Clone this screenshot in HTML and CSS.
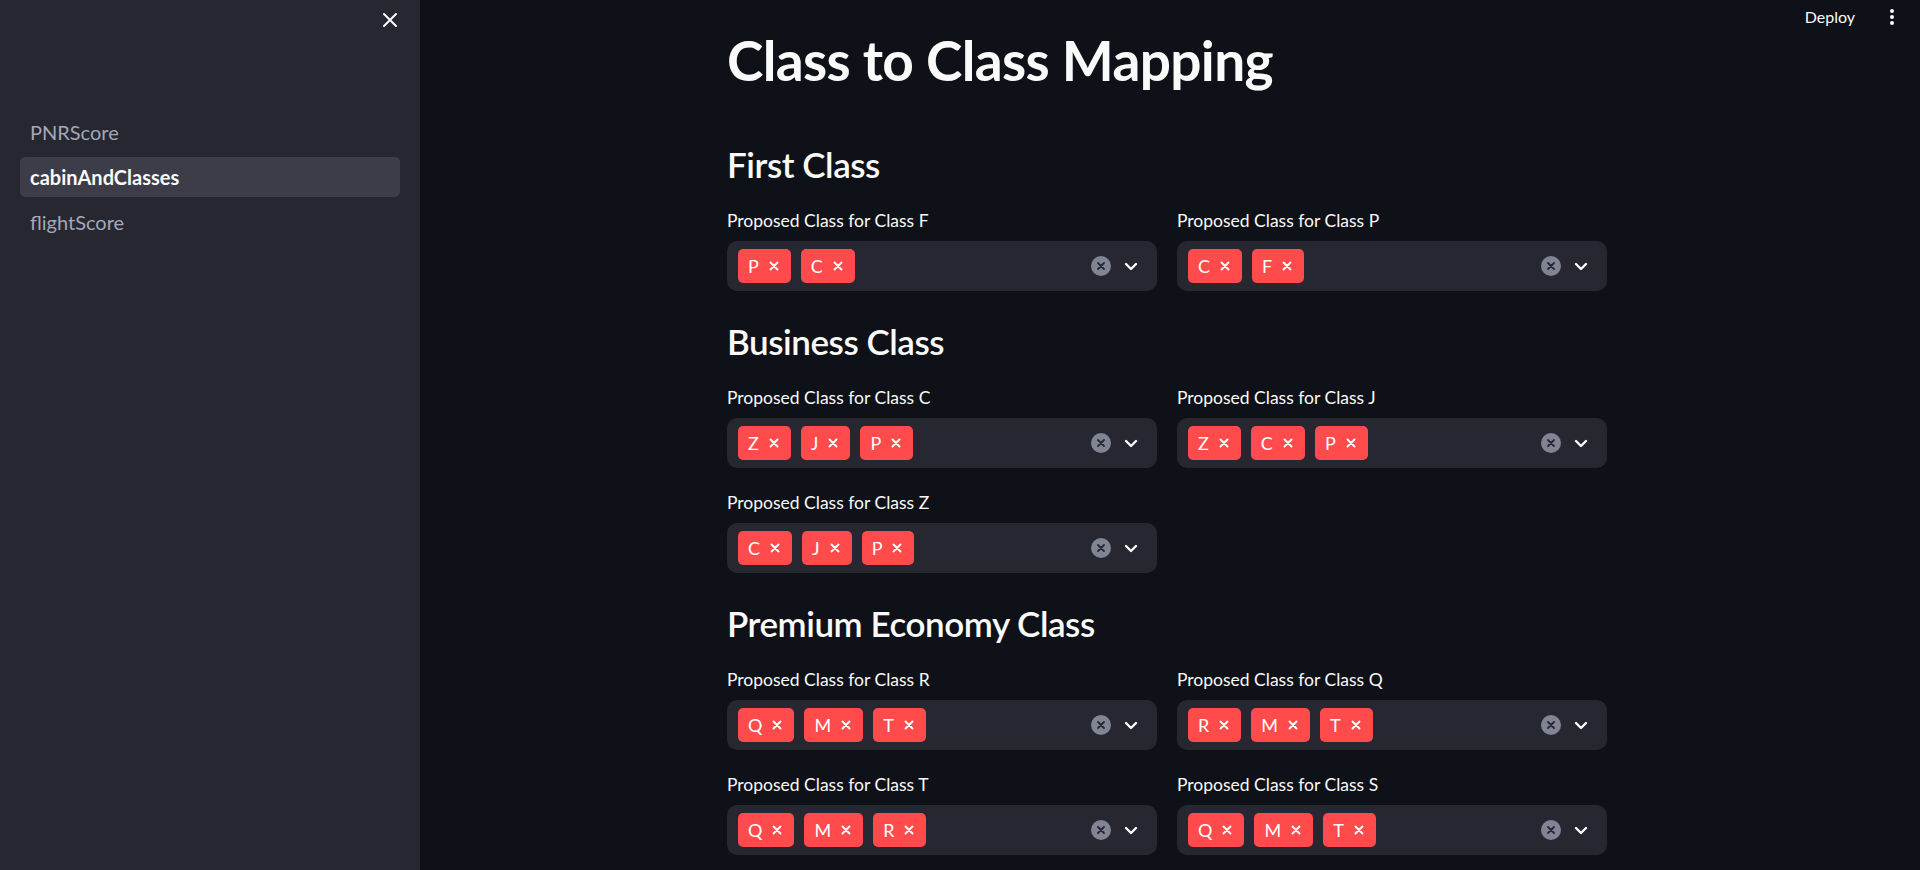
FILE: index.html
```html
<!DOCTYPE html>
<html lang="en">
<head>
<meta charset="utf-8">
<title>cabinAndClasses</title>
<link rel="stylesheet" href="styles.css">
</head>
<body>
<div class="app">
  <aside class="sidebar">
    <div class="sb-top">
      <button class="close" aria-label="Close sidebar">
        <svg width="14" height="14" viewBox="0 0 14 14"><path d="M1 1L13 13M13 1L1 13" stroke="#fafafa" stroke-width="2" stroke-linecap="round"/></svg>
      </button>
    </div>
    <nav class="nav">
      <a class="nav-item">PNRScore</a>
      <a class="nav-item active">cabinAndClasses</a>
      <a class="nav-item">flightScore</a>
    </nav>
  </aside>
  <main class="main">
    <header class="toolbar">
      <span class="deploy">Deploy</span>
      <svg class="dots" width="6" height="18" viewBox="0 0 6 18"><circle cx="3" cy="3" r="2" fill="#fafafa"/><circle cx="3" cy="9" r="2" fill="#fafafa"/><circle cx="3" cy="15" r="2" fill="#fafafa"/></svg>
    </header>
    <div class="block">
      <h1 class="title">Class to Class Mapping</h1>

      <h3 class="subheader">First Class</h3>
      <div class="cols">
        <div class="field">
          <label class="label">Proposed Class for Class F</label>
          <div class="select">
            <div class="tags">
              <span class="tag">P<svg class="tx" width="10" height="10" viewBox="0 0 10 10"><path d="M1.5 1.5L8.5 8.5M8.5 1.5L1.5 8.5"/></svg></span>
              <span class="tag">C<svg class="tx" width="10" height="10" viewBox="0 0 10 10"><path d="M1.5 1.5L8.5 8.5M8.5 1.5L1.5 8.5"/></svg></span>
            </div>
            <div class="icons">
              <svg class="clear" width="20" height="20" viewBox="0 0 20 20"><circle cx="10" cy="10" r="10"/><path d="M7 7L13 13M13 7L7 13"/></svg>
              <svg class="chev" width="14" height="9" viewBox="0 0 14 9"><path d="M2 2L7 7L12 2"/></svg>
            </div>
          </div>
        </div>
        <div class="field">
          <label class="label">Proposed Class for Class P</label>
          <div class="select">
            <div class="tags">
              <span class="tag">C<svg class="tx" width="10" height="10" viewBox="0 0 10 10"><path d="M1.5 1.5L8.5 8.5M8.5 1.5L1.5 8.5"/></svg></span>
              <span class="tag">F<svg class="tx" width="10" height="10" viewBox="0 0 10 10"><path d="M1.5 1.5L8.5 8.5M8.5 1.5L1.5 8.5"/></svg></span>
            </div>
            <div class="icons">
              <svg class="clear" width="20" height="20" viewBox="0 0 20 20"><circle cx="10" cy="10" r="10"/><path d="M7 7L13 13M13 7L7 13"/></svg>
              <svg class="chev" width="14" height="9" viewBox="0 0 14 9"><path d="M2 2L7 7L12 2"/></svg>
            </div>
          </div>
        </div>
      </div>

      <h3 class="subheader">Business Class</h3>
      <div class="cols">
        <div class="field">
          <label class="label">Proposed Class for Class C</label>
          <div class="select">
            <div class="tags">
              <span class="tag">Z<svg class="tx" width="10" height="10" viewBox="0 0 10 10"><path d="M1.5 1.5L8.5 8.5M8.5 1.5L1.5 8.5"/></svg></span>
              <span class="tag">J<svg class="tx" width="10" height="10" viewBox="0 0 10 10"><path d="M1.5 1.5L8.5 8.5M8.5 1.5L1.5 8.5"/></svg></span>
              <span class="tag">P<svg class="tx" width="10" height="10" viewBox="0 0 10 10"><path d="M1.5 1.5L8.5 8.5M8.5 1.5L1.5 8.5"/></svg></span>
            </div>
            <div class="icons">
              <svg class="clear" width="20" height="20" viewBox="0 0 20 20"><circle cx="10" cy="10" r="10"/><path d="M7 7L13 13M13 7L7 13"/></svg>
              <svg class="chev" width="14" height="9" viewBox="0 0 14 9"><path d="M2 2L7 7L12 2"/></svg>
            </div>
          </div>
        </div>
        <div class="field">
          <label class="label">Proposed Class for Class J</label>
          <div class="select">
            <div class="tags">
              <span class="tag">Z<svg class="tx" width="10" height="10" viewBox="0 0 10 10"><path d="M1.5 1.5L8.5 8.5M8.5 1.5L1.5 8.5"/></svg></span>
              <span class="tag">C<svg class="tx" width="10" height="10" viewBox="0 0 10 10"><path d="M1.5 1.5L8.5 8.5M8.5 1.5L1.5 8.5"/></svg></span>
              <span class="tag">P<svg class="tx" width="10" height="10" viewBox="0 0 10 10"><path d="M1.5 1.5L8.5 8.5M8.5 1.5L1.5 8.5"/></svg></span>
            </div>
            <div class="icons">
              <svg class="clear" width="20" height="20" viewBox="0 0 20 20"><circle cx="10" cy="10" r="10"/><path d="M7 7L13 13M13 7L7 13"/></svg>
              <svg class="chev" width="14" height="9" viewBox="0 0 14 9"><path d="M2 2L7 7L12 2"/></svg>
            </div>
          </div>
        </div>
        <div class="field">
          <label class="label">Proposed Class for Class Z</label>
          <div class="select">
            <div class="tags">
              <span class="tag">C<svg class="tx" width="10" height="10" viewBox="0 0 10 10"><path d="M1.5 1.5L8.5 8.5M8.5 1.5L1.5 8.5"/></svg></span>
              <span class="tag">J<svg class="tx" width="10" height="10" viewBox="0 0 10 10"><path d="M1.5 1.5L8.5 8.5M8.5 1.5L1.5 8.5"/></svg></span>
              <span class="tag">P<svg class="tx" width="10" height="10" viewBox="0 0 10 10"><path d="M1.5 1.5L8.5 8.5M8.5 1.5L1.5 8.5"/></svg></span>
            </div>
            <div class="icons">
              <svg class="clear" width="20" height="20" viewBox="0 0 20 20"><circle cx="10" cy="10" r="10"/><path d="M7 7L13 13M13 7L7 13"/></svg>
              <svg class="chev" width="14" height="9" viewBox="0 0 14 9"><path d="M2 2L7 7L12 2"/></svg>
            </div>
          </div>
        </div>
      </div>

      <h3 class="subheader">Premium Economy Class</h3>
      <div class="cols">
        <div class="field">
          <label class="label">Proposed Class for Class R</label>
          <div class="select">
            <div class="tags">
              <span class="tag">Q<svg class="tx" width="10" height="10" viewBox="0 0 10 10"><path d="M1.5 1.5L8.5 8.5M8.5 1.5L1.5 8.5"/></svg></span>
              <span class="tag">M<svg class="tx" width="10" height="10" viewBox="0 0 10 10"><path d="M1.5 1.5L8.5 8.5M8.5 1.5L1.5 8.5"/></svg></span>
              <span class="tag">T<svg class="tx" width="10" height="10" viewBox="0 0 10 10"><path d="M1.5 1.5L8.5 8.5M8.5 1.5L1.5 8.5"/></svg></span>
            </div>
            <div class="icons">
              <svg class="clear" width="20" height="20" viewBox="0 0 20 20"><circle cx="10" cy="10" r="10"/><path d="M7 7L13 13M13 7L7 13"/></svg>
              <svg class="chev" width="14" height="9" viewBox="0 0 14 9"><path d="M2 2L7 7L12 2"/></svg>
            </div>
          </div>
        </div>
        <div class="field">
          <label class="label">Proposed Class for Class Q</label>
          <div class="select">
            <div class="tags">
              <span class="tag">R<svg class="tx" width="10" height="10" viewBox="0 0 10 10"><path d="M1.5 1.5L8.5 8.5M8.5 1.5L1.5 8.5"/></svg></span>
              <span class="tag">M<svg class="tx" width="10" height="10" viewBox="0 0 10 10"><path d="M1.5 1.5L8.5 8.5M8.5 1.5L1.5 8.5"/></svg></span>
              <span class="tag">T<svg class="tx" width="10" height="10" viewBox="0 0 10 10"><path d="M1.5 1.5L8.5 8.5M8.5 1.5L1.5 8.5"/></svg></span>
            </div>
            <div class="icons">
              <svg class="clear" width="20" height="20" viewBox="0 0 20 20"><circle cx="10" cy="10" r="10"/><path d="M7 7L13 13M13 7L7 13"/></svg>
              <svg class="chev" width="14" height="9" viewBox="0 0 14 9"><path d="M2 2L7 7L12 2"/></svg>
            </div>
          </div>
        </div>
        <div class="field">
          <label class="label">Proposed Class for Class T</label>
          <div class="select">
            <div class="tags">
              <span class="tag">Q<svg class="tx" width="10" height="10" viewBox="0 0 10 10"><path d="M1.5 1.5L8.5 8.5M8.5 1.5L1.5 8.5"/></svg></span>
              <span class="tag">M<svg class="tx" width="10" height="10" viewBox="0 0 10 10"><path d="M1.5 1.5L8.5 8.5M8.5 1.5L1.5 8.5"/></svg></span>
              <span class="tag">R<svg class="tx" width="10" height="10" viewBox="0 0 10 10"><path d="M1.5 1.5L8.5 8.5M8.5 1.5L1.5 8.5"/></svg></span>
            </div>
            <div class="icons">
              <svg class="clear" width="20" height="20" viewBox="0 0 20 20"><circle cx="10" cy="10" r="10"/><path d="M7 7L13 13M13 7L7 13"/></svg>
              <svg class="chev" width="14" height="9" viewBox="0 0 14 9"><path d="M2 2L7 7L12 2"/></svg>
            </div>
          </div>
        </div>
        <div class="field">
          <label class="label">Proposed Class for Class S</label>
          <div class="select">
            <div class="tags">
              <span class="tag">Q<svg class="tx" width="10" height="10" viewBox="0 0 10 10"><path d="M1.5 1.5L8.5 8.5M8.5 1.5L1.5 8.5"/></svg></span>
              <span class="tag">M<svg class="tx" width="10" height="10" viewBox="0 0 10 10"><path d="M1.5 1.5L8.5 8.5M8.5 1.5L1.5 8.5"/></svg></span>
              <span class="tag">T<svg class="tx" width="10" height="10" viewBox="0 0 10 10"><path d="M1.5 1.5L8.5 8.5M8.5 1.5L1.5 8.5"/></svg></span>
            </div>
            <div class="icons">
              <svg class="clear" width="20" height="20" viewBox="0 0 20 20"><circle cx="10" cy="10" r="10"/><path d="M7 7L13 13M13 7L7 13"/></svg>
              <svg class="chev" width="14" height="9" viewBox="0 0 14 9"><path d="M2 2L7 7L12 2"/></svg>
            </div>
          </div>
        </div>
      </div>
    </div>
  </main>
</div>
</body>
</html>
```

FILE: styles.css
```css
* { box-sizing: border-box; }

html, body {
  margin: 0;
  padding: 0;
  height: 100%;
  overflow: hidden;
  background: #0e1117;
  color: #fafafa;
  font-family: "Lato", "Noto Sans", sans-serif;
}

.app {
  display: flex;
  height: 100vh;
}

/* Sidebar */
.sidebar {
  width: 420px;
  flex: 0 0 420px;
  background: #262730;
  display: flex;
  flex-direction: column;
}

.sb-top {
  height: 112px;
  display: flex;
  justify-content: flex-end;
  align-items: flex-start;
  padding: 13px 23px 0 0;
}

.close {
  background: none;
  border: 0;
  padding: 0;
  width: 14px;
  height: 14px;
  display: block;
  cursor: pointer;
}
.close svg { display: block; }

.nav {
  display: flex;
  flex-direction: column;
  gap: 5px;
  padding: 0 20px;
}

.nav-item {
  display: block;
  height: 40px;
  line-height: 40px;
  padding: 0 10px;
  border-radius: 5px;
  font-size: 20px;
  color: #a3a8b8;
  text-decoration: none;
}

.nav-item.active {
  background: #3c3d49;
  color: #fafafa;
  font-weight: 700;
}

/* Main */
.main {
  flex: 1;
  position: relative;
  padding-right: 6px;
  overflow: hidden;
}

.toolbar {
  position: absolute;
  top: 0;
  right: 0;
  height: 33px;
  display: flex;
  align-items: center;
  gap: 34px;
  padding-right: 25px;
}

.deploy {
  font-size: 16px;
  color: #fafafa;
}

.dots { display: block; }

.block {
  width: 880px;
  margin: 0 auto;
  display: flex;
  flex-direction: column;
  gap: 20px;
  padding-bottom: 160px;
}

.title {
  margin: 0;
  padding: 27px 0 21px;
  font-size: 55px;
  line-height: 66px;
  font-weight: 700;
  letter-spacing: -0.65px;
}

.subheader {
  margin: 0;
  padding: 8.5px 0 1.5px;
  font-size: 35px;
  line-height: 42px;
  font-weight: 600;
  letter-spacing: -0.45px;
}

.cols {
  display: grid;
  grid-template-columns: 430px 430px;
  column-gap: 20px;
  row-gap: 20px;
}

.field {
  display: flex;
  flex-direction: column;
}

.label {
  display: block;
  height: 30px;
  line-height: 30px;
  font-size: 17.5px;
  color: #fafafa;
  margin-bottom: 5px;
}

.select {
  height: 50px;
  background: #262730;
  border-radius: 10px;
  display: flex;
  align-items: center;
  justify-content: space-between;
  padding: 0 19px 0 11px;
}

.tags {
  display: flex;
  align-items: center;
  gap: 10px;
}

.tag {
  height: 34px;
  display: inline-flex;
  align-items: center;
  background: #ff4b4b;
  color: #ffffff;
  border-radius: 5px;
  padding: 0 12px 0 10px;
  font-size: 18px;
}

.tx {
  display: block;
  margin-left: 10px;
}
.tx path {
  stroke: #ffffff;
  stroke-width: 1.9;
  stroke-linecap: round;
  fill: none;
}

.icons {
  display: flex;
  align-items: center;
  gap: 13px;
}

.clear { display: block; }
.clear circle { fill: #808495; }
.clear path {
  stroke: #262730;
  stroke-width: 1.8;
  stroke-linecap: round;
  fill: none;
}

.chev { display: block; }
.chev path {
  stroke: #fafafa;
  stroke-width: 2.4;
  stroke-linecap: round;
  stroke-linejoin: round;
  fill: none;
}
```
